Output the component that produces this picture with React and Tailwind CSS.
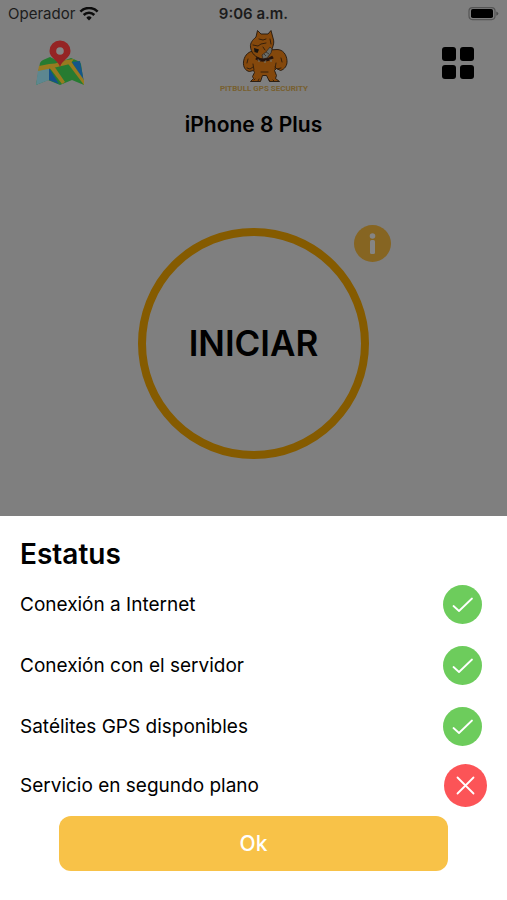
import { useState } from 'react';

const checks = [
    { id: 'internet', label: 'Conexión a Internet', ok: true },
    { id: 'server', label: 'Conexión con el servidor', ok: true },
    { id: 'gps', label: 'Satélites GPS disponibles', ok: true },
    { id: 'background', label: 'Servicio en segundo plano', ok: false },
];

function WifiIcon() {
    return (
        <svg viewBox="0 0 20 15" className="w-5 h-[15px]" fill="none" stroke="#0c0c0c" strokeWidth="2.6" aria-hidden="true">
            <path d="M1.4 4.6a12.2 12.2 0 0 1 17.2 0" />
            <path d="M4.7 8a7.5 7.5 0 0 1 10.6 0" />
            <path d="M10 13.4 7.3 10.7a3.8 3.8 0 0 1 5.4 0z" fill="#0c0c0c" stroke="none" />
        </svg>
    );
}

function BatteryIcon() {
    return (
        <svg viewBox="0 0 31 14" className="w-[31px] h-3.5" aria-hidden="true">
            <rect x="1" y="0.6" width="26" height="12" rx="3.5" fill="none" stroke="#555" strokeWidth="1.2" />
            <rect x="3" y="2" width="22" height="9" rx="1.8" fill="#000" />
            <path d="M28.3 4.4q2 .7 2 2.2t-2 2.2z" fill="#4c4c4c" />
        </svg>
    );
}

function MapIcon() {
    return (
        <svg viewBox="0 0 50 46" className="w-[50px] h-[46px]" aria-hidden="true">
            <path d="M5 23q1-2 3-3l7-3 10 5 11-4 7 3q2 1 3 3l3 21-12-5-12 5-12-5L1 45z" fill="#267b31" />
            <path d="m3 30 11-2v12L1 45z" fill="#5d8790" />
            <path d="m14 28 10 16-10-4z" fill="#14508a" />
            <path d="m37 22 8-1 4 21z" fill="#14558a" />
            <path d="m4 26 10-2 6-.5 11-3.5 8-1-4 5-17 4-15 3z" fill="#987a20" />
            <path d="m14 27 5-1 11 16-3 2z" fill="#987a20" />
            <path d="m31 21 4-1 14 20v5z" fill="#987a20" />
            <path d="M25 27C23 20 14.5 18 14.5 11a10.5 10.5 0 0 1 21 0C35.500 18 27 20 25 27z" fill="#952424" />
            <circle cx="25" cy="11" r="3.8" fill="#858585" />
        </svg>
    );
}

function Logo() {
    return (
        <svg viewBox="0 0 90 66" className="w-[90px] h-[66px]" role="img" aria-label="Pitbull GPS Security">
            <g fill="#84480c" stroke="#24170c" strokeWidth=".9" strokeLinejoin="round">
                <path d="M34 21c-6 1-9 6-9.500 11-.500 5 2 9 6 9.500l4-1 1 2-2 4 1 2-3 3h10l2-6h4l3 6h10l-4-3 1-3-2-5 2-2 4 2c4-1 7-5 6.500-10-.500-6-4-11-10-11z" />
                <path d="M37 7 38.500 0.500 42 4h7l3-3.500L54 8c1 3 1 5 0 8-1 4-2 6-4 9-2 4-6 5-10 3-5-2-8-6-8.500-11-.500-4 2-7 5.500-10z" />
            </g>
            <g fill="none" stroke="#2d1b0b" strokeWidth=".9" strokeLinecap="round">
                <path d="m34 15 5 1 3-2 5-1M40 9l4 1 3-1M51 9l1 5M44 17l2 3M29 29l-1 4M62 28l1 4M34 34l1 6M57 33l-1 6M42 42h7" />
                <path d="m28 38 3 1 3-2M62 38l-4 1-2-2M35 50l1-1m3 2 1-2M50 50l1 1m3-1 1 1" />
            </g>
            <path d="m35 18 5 1.500-1.500 3.500-3-1z" fill="#161310" />
            <path d="m43 25 4-3 4-5 2 2-1 4-4 5-4 1z" fill="#686b66" stroke="#32241a" strokeWidth=".7" />
            <path d="m47 22 3 2m-5 0 2 2" stroke="#32241a" strokeWidth=".7" />
            <path d="M37 28q8 5 17-1" fill="none" stroke="#25130c" strokeWidth="2.8" />
            <path d="m39 29 1 3 1-2m4 1 1 2 1-3m4-1 1 3 1-3" fill="none" stroke="#78715f" strokeWidth=".7" />
            <text x="45" y="61" textAnchor="middle" fontFamily="Roboto, sans-serif" fontSize="8" fontWeight="700" fill="#78602f">PITBULL GPS SECURITY</text>
        </svg>
    );
}

function StatusIcon({ ok }) {
    if (ok) {
        return (
            <svg viewBox="0 0 39 39" className="w-[39px] h-[39px] mr-[5px]" role="img" aria-label="Correcto">
                <circle cx="19.5" cy="19.5" r="19.5" fill="#6dcc5c" />
                <path d="m10.5 21 5.5 5L29 13.5" fill="none" stroke="#fff" strokeWidth="1.8" strokeLinecap="round" strokeLinejoin="round" />
            </svg>
        );
    }
    return (
        <svg viewBox="0 0 43 43" className="w-[43px] h-[43px]" role="img" aria-label="Error">
            <circle cx="21.5" cy="21.5" r="21.5" fill="#fc5457" />
            <path d="m13.5 13.5 16 16m0-16-16 16" fill="none" stroke="#fff" strokeWidth="1.8" strokeLinecap="round" />
        </svg>
    );
}

export default function App() {
    const [open, setOpen] = useState(true);

    return (
        <div className="min-h-screen flex flex-col bg-[#7f7f7f] text-black font-['Inter',sans-serif]">
            <div className="grid grid-cols-3 items-center h-7 px-2 text-[15px] text-[#1c1c1c]">
                <div className="flex items-center gap-1">
                    <span>Operador</span>
                    <WifiIcon />
                </div>
                <span className="text-center font-semibold">9:06 a.m.</span>
                <div className="flex justify-end">
                    <BatteryIcon />
                </div>
            </div>

            <header className="flex justify-between items-center h-[70px] pl-[35px] pr-[33px]">
                <button type="button" aria-label="Mapa">
                    <MapIcon />
                </button>
                <Logo />
                <button type="button" aria-label="Menú" className="grid grid-cols-2 gap-1">
                    <span className="size-3.5 rounded-[3px] bg-black" />
                    <span className="size-3.5 rounded-[3px] bg-black" />
                    <span className="size-3.5 rounded-[3px] bg-black" />
                    <span className="size-3.5 rounded-[3px] bg-black" />
                </button>
            </header>

            <main className="flex-1 flex flex-col items-center">
                <h1 className="mt-[13px] text-[21px] leading-7 font-semibold">iPhone 8 Plus</h1>
                <div className="relative mt-[89px] mb-14">
                    <button type="button" className="size-[231px] rounded-full border-8 border-[#855b00] text-[35px] font-semibold">
                        INICIAR
                    </button>
                    <button type="button" aria-label="Información" onClick={() => setOpen(true)} className="absolute -top-[3px] -right-[22px]">
                        <svg viewBox="0 0 37 37" className="size-[37px]" aria-hidden="true">
                            <circle cx="18.5" cy="18.5" r="18.5" fill="#866522" />
                            <circle cx="18.5" cy="11" r="2.8" fill="#858585" />
                            <rect x="16" y="15" width="5" height="14" rx="1.5" fill="#858585" />
                        </svg>
                    </button>
                </div>
            </main>

            {open && (
                <section role="dialog" aria-labelledby="status-title" className="bg-white pt-5 pb-[29px]">
                    <h2 id="status-title" className="px-5 text-[28px] leading-9 font-semibold">Estatus</h2>
                    <ul className="px-5 pt-[13px]">
                        {checks.map((check) => (
                            <li key={check.id} className="flex items-center justify-between mb-[22px] last:-mt-1 last:mb-[9px] text-[19px] leading-6">
                                <span>{check.label}</span>
                                <StatusIcon ok={check.ok} />
                            </li>
                        ))}
                    </ul>
                    <div className="px-[59px]">
                        <button type="button" onClick={() => setOpen(false)} className="w-full h-[55px] rounded-xl bg-[#f8c248] text-white text-[21px] font-medium">
                            Ok
                        </button>
                    </div>
                </section>
            )}
        </div>
    );
}
